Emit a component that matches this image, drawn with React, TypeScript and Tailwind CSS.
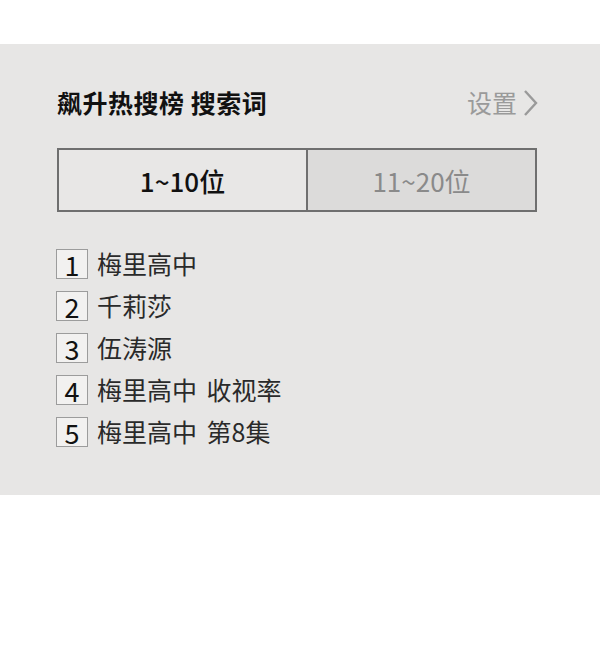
const items = ['梅里高中', '千莉莎', '伍涛源', '梅里高中 收视率', '梅里高中 第8集']

export default function App() {
  return (
    <div
      className="w-[600px] h-[660px] bg-white pt-[44px]"
      style={{ fontFamily: '"Noto Sans CJK SC", "Noto Sans", sans-serif' }}
    >
      <section className="h-[451px] bg-[#e7e6e5] pl-[57px] pt-[39px]">
        <div className="w-[480px] flex items-center justify-between h-[40px]">
          <h2 className="text-[25px] font-bold text-[#111] tracking-[0.5px]">飙升热搜榜 搜索词</h2>
          <button className="flex items-center text-[25px] text-[#9a9a9a] -mr-[2px]">
            设置
            <svg viewBox="0 0 16 28" className="w-[16px] h-[28px] ml-[6px]" fill="none" stroke="currentColor" strokeWidth="2.4">
              <polyline points="2,2 13,14 2,26" />
            </svg>
          </button>
        </div>

        <div className="mt-[25px] w-[480px] grid grid-cols-[249px_1fr] h-[64px] border-2 border-[#6f6f6f]">
          <div className="flex items-center justify-center text-[26px] font-medium text-[#111] bg-[#e8e7e6] border-r-2 border-[#6f6f6f]">
            1~10位
          </div>
          <div className="flex items-center justify-center text-[26px] text-[#8a8a8a] bg-[#dcdbda]">
            11~20位
          </div>
        </div>

        <ul className="mt-[37px] flex flex-col gap-[12px] -ml-[1px]">
          {items.map((name, i) => (
            <li key={name} className="flex items-center h-[30px]">
              <span className="w-[32px] h-[30px] flex items-center justify-center border border-[#9c9c9c] bg-[#f2f1f0] text-[27px] leading-none text-[#111]">
                {i + 1}
              </span>
              <span className="ml-[9px] text-[25px] text-[#2a2a2a] [word-spacing:4px]">{name}</span>
            </li>
          ))}
        </ul>
      </section>
    </div>
  )
}
